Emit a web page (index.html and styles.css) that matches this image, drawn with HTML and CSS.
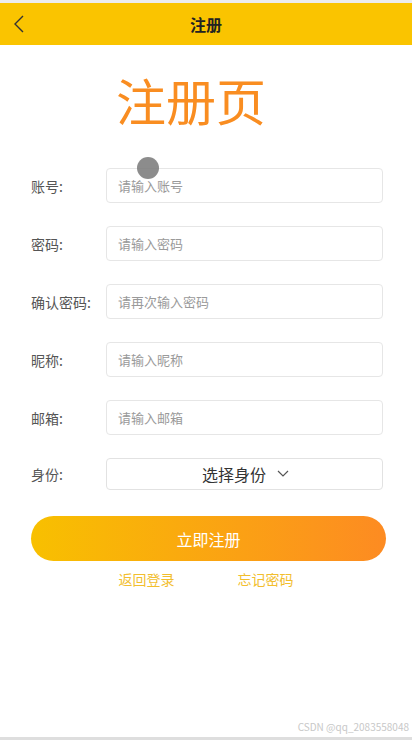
FILE: index.html
```html
<!DOCTYPE html>
<html lang="zh-CN">
<head>
    <meta charset="UTF-8">
    <meta name="viewport" content="width=device-width, initial-scale=1.0">
    <title>注册</title>
    <link rel="stylesheet" href="styles.css">
</head>
<body>
    <div class="page">
        <div class="nav-bar">
            <span class="back">
                <svg width="12" height="18" viewBox="0 0 12 18">
                    <polyline points="10,1 2,9 10,17" fill="none" stroke="#333" stroke-width="1.4"/>
                </svg>
            </span>
            <span class="nav-title">注册</span>
        </div>

        <div class="page-title">注册页</div>

        <div class="form">
            <div class="form-row">
                <label>账号:</label>
                <div class="field">
                    <input type="text" placeholder="请输入账号">
                    <span class="touch-dot"></span>
                </div>
            </div>
            <div class="form-row">
                <label>密码:</label>
                <div class="field"><input type="password" placeholder="请输入密码"></div>
            </div>
            <div class="form-row">
                <label>确认密码:</label>
                <div class="field"><input type="password" placeholder="请再次输入密码"></div>
            </div>
            <div class="form-row">
                <label>昵称:</label>
                <div class="field"><input type="text" placeholder="请输入昵称"></div>
            </div>
            <div class="form-row">
                <label>邮箱:</label>
                <div class="field"><input type="text" placeholder="请输入邮箱"></div>
            </div>
            <div class="form-row select-row">
                <label>身份:</label>
                <div class="select">
                    <span>选择身份</span>
                    <svg width="12" height="8" viewBox="0 0 12 8">
                        <polyline points="1,1 6,6 11,1" fill="none" stroke="#555" stroke-width="1.2"/>
                    </svg>
                </div>
            </div>
        </div>

        <button class="submit-btn">立即注册</button>

        <div class="links">
            <a>返回登录</a>
            <a>忘记密码</a>
        </div>

        <div class="watermark">CSDN @qq_2083558048</div>
    </div>
</body>
</html>
```

FILE: styles.css
```css
* {
    box-sizing: border-box;
}

body {
    margin: 0;
    font-family: "Noto Sans CJK SC", "Noto Sans", sans-serif;
    background-color: #fff;
}

.page {
    height: 740px;
    display: flex;
    flex-direction: column;
    border-top: 3px solid #ececec;
    border-bottom: 3px solid #dedede;
}

.nav-bar {
    height: 42px;
    background-color: #fac400;
    display: flex;
    align-items: center;
    justify-content: center;
    position: relative;
}

.back {
    position: absolute;
    left: 13px;
    top: 12px;
    line-height: 0;
}

.nav-title {
    font-size: 16px;
    font-weight: bold;
    color: #222;
}

.page-title {
    margin-top: 25px;
    padding-right: 30px;
    text-align: center;
    font-size: 50px;
    line-height: 58px;
    color: #f98d21;
}

.form {
    margin-top: 40px;
    padding: 0 29px 0 31px;
    display: flex;
    flex-direction: column;
    gap: 23px;
}

.form-row {
    display: flex;
    align-items: center;
    height: 35px;
}

.select-row {
    height: 32px;
}

.form-row label {
    width: 75px;
    font-size: 14px;
    color: #555;
}

.field {
    flex: 1;
    position: relative;
}

.field input {
    width: 100%;
    height: 35px;
    border: 1px solid #e6e6e6;
    border-radius: 4px;
    padding: 0 11px;
    font-family: inherit;
    font-size: 13px;
    outline: none;
}

.field input::placeholder {
    color: #9a9a9a;
}

.touch-dot {
    position: absolute;
    left: 31px;
    top: -11px;
    width: 22px;
    height: 22px;
    border-radius: 50%;
    background-color: rgba(120, 120, 120, 0.85);
}

.select {
    flex: 1;
    height: 32px;
    border: 1px solid #e2e2e2;
    border-radius: 4px;
    display: flex;
    align-items: center;
    justify-content: center;
    gap: 11px;
    padding-left: 2px;
    font-size: 16px;
    color: #333;
}

.submit-btn {
    margin: 26px 26px 0 31px;
    height: 45px;
    border: none;
    border-radius: 23px;
    background: linear-gradient(to right, #f8c000, #fd8b22);
    color: #fff;
    font-family: inherit;
    font-size: 16px;
}

.links {
    margin-top: 8px;
    display: flex;
    justify-content: center;
    gap: 63px;
}

.links a {
    font-size: 14px;
    color: #f2be2e;
}

.watermark {
    margin-top: auto;
    margin-bottom: 3px;
    text-align: right;
    padding-right: 3px;
    font-size: 10px;
    color: #c8c8c8;
}
```
